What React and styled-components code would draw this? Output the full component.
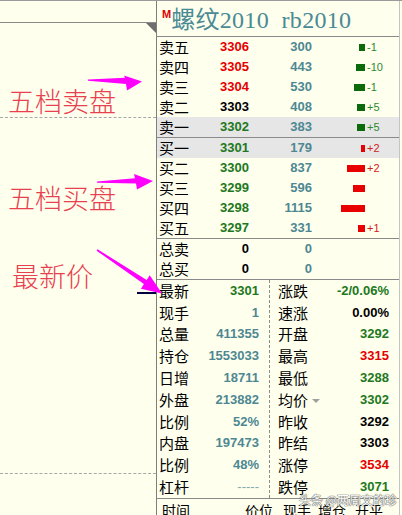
import React from 'react';
import styled, { createGlobalStyle } from 'styled-components';

const RED = '#E60000';
const GREEN = '#217821';
const TEAL = '#4D8892';
const BLACK = '#000000';

const Global = createGlobalStyle`
  html, body { margin: 0; padding: 0; background: #FFFFEE; }
  body { font-family: "Liberation Sans", Arial, sans-serif; }
  * { box-sizing: border-box; }
`;

const Page = styled.div`
  position: relative;
  width: 402px;
  height: 515px;
  overflow: hidden;
  background: #FFFFEE;
  border-top: 1px solid #9a9a9a;
  display: flex;
`;

const LeftPanel = styled.div`
  position: relative;
  width: 156px;
  flex: none;
  display: flex;
  flex-direction: column;
`;

const ChartTop = styled.div`
  position: relative;
  height: 22px;
  border-bottom: 1px solid #8a8a8a;
  flex: none;
`;

const Corner = styled.div`
  position: absolute;
  right: 0;
  top: 22px;
  width: 0;
  height: 0;
  border-top: 10px solid #6e6e6e;
  border-left: 10px solid transparent;
`;

const Pane = styled.div`
  height: ${p => p.$h}px;
  flex: ${p => (p.$h ? 'none' : '1')};
  border-bottom: ${p => (p.$h ? '1px dashed #a8a8a8' : 'none')};
  position: relative;
`;

const PriceMark = styled.div`
  position: absolute;
  right: 0;
  top: 174px;
  width: 19px;
  height: 2px;
  background: #000040;
`;

const Quote = styled.div`
  flex: 1;
  margin-right: 2px;
  border-left: 1px solid #7f7f7f;
  border-right: 1px solid #c4c4c4;
  display: flex;
  flex-direction: column;
`;

const Header = styled.div`
  height: 36px;
  flex: none;
  border-bottom: 1px solid #8a8a8a;
  display: flex;
  align-items: flex-start;
  padding-left: 5px;
`;

const Sup = styled.span`
  font-family: "Liberation Sans", Arial, sans-serif;
  font-weight: bold;
  font-size: 11px;
  color: #E00000;
  margin-top: 8px;
  line-height: 11px;
`;

const Title = styled.span`
  font-family: "Liberation Serif", "Noto Sans CJK SC", serif;
  font-size: 24px;
  line-height: 26px;
  margin-top: 6px;
  color: #4A8A94;
  white-space: pre;
  letter-spacing: 0.3px;
`;

const Section = styled.div`
  flex: none;
  border-top: ${p => (p.$top ? '1px solid #8a8a8a' : 'none')};
`;

const Row = styled.div`
  display: grid;
  grid-template-columns: 41px 49px 63px 53px 1fr;
  align-items: center;
  height: 20px;
  padding-left: 2px;
  background: ${p => (p.$hl ? '#E6E6E6' : 'transparent')};
`;

const Label = styled.span`
  font-family: "Noto Sans CJK SC", sans-serif;
  font-size: 15px;
  line-height: 20px;
  color: #000;
  white-space: nowrap;
  display: flex;
  align-items: center;
`;

const Num = styled.span`
  font-family: "Liberation Sans", Arial, sans-serif;
  font-weight: ${p => (p.$light ? 'normal' : 'bold')};
  font-size: 13px;
  line-height: 20px;
  text-align: right;
  color: ${p => p.$c};
  white-space: nowrap;
`;

const BarCell = styled.div`
  display: flex;
  justify-content: flex-end;
  align-items: center;
  height: 20px;
`;

const Bar = styled.div`
  height: 7px;
  background: ${p => p.$c};
`;

const Chg = styled.span`
  font-family: "Liberation Sans", Arial, sans-serif;
  font-size: 11px;
  padding-left: 2px;
  color: ${p => p.$c};
`;

const Stats = styled.div`
  flex: none;
  display: flex;
  border-top: 1px solid #8a8a8a;
  border-bottom: 1px solid #8a8a8a;
`;

const StatCol = styled.div`
  width: ${p => (p.$w ? `${p.$w}px` : 'auto')};
  flex: ${p => (p.$w ? 'none' : '1')};
  border-left: ${p => (p.$dash ? '1px dashed #8c8c8c' : 'none')};
  padding-left: ${p => (p.$dash ? 8 : 2)}px;
  padding-right: 10px;
`;

const StatRow = styled.div`
  height: 21.8px;
  display: flex;
  align-items: center;
  justify-content: space-between;
`;

const DownTri = styled.span`
  display: inline-block;
  width: 0;
  height: 0;
  margin-left: 4px;
  margin-top: 2px;
  border-left: 4px solid transparent;
  border-right: 4px solid transparent;
  border-top: 4px solid #a0a0a0;
`;

const TradeHead = styled.div`
  display: grid;
  grid-template-columns: 83px 38px 35px 37px 1fr;
  padding-left: 5px;
  padding-top: 1px;
  font-family: "Noto Sans CJK SC", sans-serif;
  font-size: 14px;
  line-height: 20px;
  color: #000;
`;

const Watermark = styled.div`
  position: absolute;
  right: 5px;
  bottom: 9px;
  font-family: "Noto Sans CJK SC", sans-serif;
  font-size: 12px;
  line-height: 13px;
  color: #ffffff;
  text-shadow: 0 0 1px #606060, 0 0 1px #606060, 0 0 1px #606060;
  white-space: nowrap;
  z-index: 6;
`;

const Callout = styled.div`
  position: absolute;
  left: ${p => p.$x}px;
  top: ${p => p.$y}px;
  font-family: "Noto Sans CJK SC", sans-serif;
  font-weight: 300;
  font-size: 27px;
  line-height: 27px;
  color: #E8404F;
  white-space: nowrap;
  z-index: 4;
`;

const ArrowLayer = styled.svg`
  position: absolute;
  left: 0;
  top: 0;
  width: 402px;
  height: 515px;
  pointer-events: none;
  z-index: 5;
`;

const sell = [
  { l: '卖五', p: '3306', pc: RED, v: '300', b: 6, c: '-1' },
  { l: '卖四', p: '3305', pc: RED, v: '443', b: 9, c: '-10' },
  { l: '卖三', p: '3304', pc: RED, v: '530', b: 11, c: '-1' },
  { l: '卖二', p: '3303', pc: BLACK, v: '408', b: 8, c: '+5' },
  { l: '卖一', p: '3302', pc: GREEN, v: '383', b: 8, c: '+5', hl: true },
];

const buy = [
  { l: '买一', p: '3301', pc: GREEN, v: '179', b: 4, c: '+2', hl: true },
  { l: '买二', p: '3300', pc: GREEN, v: '837', b: 18, c: '+2' },
  { l: '买三', p: '3299', pc: GREEN, v: '596', b: 12, c: '' },
  { l: '买四', p: '3298', pc: GREEN, v: '1115', b: 24, c: '' },
  { l: '买五', p: '3297', pc: GREEN, v: '331', b: 7, c: '+1' },
];

const leftStats = [
  ['最新', '3301', GREEN],
  ['现手', '1', TEAL],
  ['总量', '411355', TEAL],
  ['持仓', '1553033', TEAL],
  ['日增', '18711', TEAL],
  ['外盘', '213882', TEAL],
  ['比例', '52%', TEAL],
  ['内盘', '197473', TEAL],
  ['比例', '48%', TEAL],
  ['杠杆', '-----', '#7FAAB2', true],
];

const rightStats = [
  ['涨跌', '-2/0.06%', GREEN],
  ['速涨', '0.00%', BLACK],
  ['开盘', '3292', GREEN],
  ['最高', '3315', RED],
  ['最低', '3288', GREEN],
  ['均价', '3302', GREEN, false, true],
  ['昨收', '3292', BLACK],
  ['昨结', '3303', BLACK],
  ['涨停', '3534', RED],
  ['跌停', '3071', GREEN],
];

function OrderRow({ r, barColor, chgColor }) {
  return (
    <Row $hl={r.hl}>
      <Label>{r.l}</Label>
      <Num $c={r.pc}>{r.p}</Num>
      <Num $c={TEAL}>{r.v}</Num>
      <BarCell>
        <Bar $c={barColor} style={{ width: r.b }} />
      </BarCell>
      <Chg $c={chgColor}>{r.c}</Chg>
    </Row>
  );
}

function StatList({ items }) {
  return items.map(([l, v, c, light, tri], i) => (
    <StatRow key={i}>
      <Label>
        {l}
        {tri && <DownTri />}
      </Label>
      <Num $c={c} $light={light}>{v}</Num>
    </StatRow>
  ));
}

export default function App() {
  return (
    <>
      <Global />
      <Page>
        <LeftPanel>
          <ChartTop>
            <Corner />
          </ChartTop>
          <Pane $h={95} />
          <Pane $h={356}>
            <PriceMark />
          </Pane>
          <Pane />
        </LeftPanel>

        <Quote>
          <Header>
            <Sup>M</Sup>
            <Title>{'螺纹2010  rb2010'}</Title>
          </Header>
          <Section>
            {sell.map(r => (
              <OrderRow key={r.l} r={r} barColor="#0B6B0B" chgColor="#2D8A2D" />
            ))}
          </Section>
          <Section $top>
            {buy.map(r => (
              <OrderRow key={r.l} r={r} barColor="#E80000" chgColor="#D42020" />
            ))}
          </Section>
          <Section $top>
            <Row>
              <Label>总卖</Label>
              <Num $c={BLACK}>0</Num>
              <Num $c={TEAL}>0</Num>
            </Row>
            <Row>
              <Label>总买</Label>
              <Num $c={BLACK}>0</Num>
              <Num $c={TEAL}>0</Num>
            </Row>
          </Section>
          <Stats>
            <StatCol $w={112}>
              <StatList items={leftStats} />
            </StatCol>
            <StatCol $dash>
              <StatList items={rightStats} />
            </StatCol>
          </Stats>
          <TradeHead>
            <span>时间</span>
            <span>价位</span>
            <span>现手</span>
            <span>增仓</span>
            <span>开平</span>
          </TradeHead>
        </Quote>

        <Callout $x={8} $y={86}>五档卖盘</Callout>
        <Callout $x={8} $y={183}>五档买盘</Callout>
        <Callout $x={12} $y={261}>最新价</Callout>

        <ArrowLayer viewBox="0 0 402 515">
          <polygon
            fill="#FF00FF"
            points="88,78.6 125,76.8 124,74.5 142,80.5 127,89.5 126,83 88,79.8"
          />
          <polygon
            fill="#FF00FF"
            points="97,180.4 135,177.2 134,173 153,180 137,188.5 136,182.5 97,181.8"
          />
          <polygon
            fill="#FF00FF"
            points="97.5,248.3 146.7,278.9 149.7,274.3 162,292.5 140.9,287.7 143.9,283.1 96.6,249.7"
          />
        </ArrowLayer>

        <Watermark>头条 @两周文的珍</Watermark>
      </Page>
    </>
  );
}
